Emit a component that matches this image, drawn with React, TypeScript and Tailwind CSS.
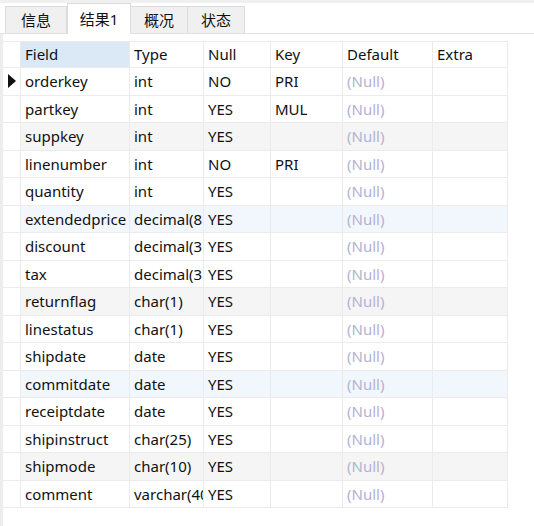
import React from 'react';

type Row = { field: string; type: string; nul: string; key: string; tint?: 'gray' | 'blue' };

const rows: Row[] = [
  { field: 'orderkey', type: 'int', nul: 'NO', key: 'PRI' },
  { field: 'partkey', type: 'int', nul: 'YES', key: 'MUL' },
  { field: 'suppkey', type: 'int', nul: 'YES', key: '', tint: 'gray' },
  { field: 'linenumber', type: 'int', nul: 'NO', key: 'PRI' },
  { field: 'quantity', type: 'int', nul: 'YES', key: '' },
  { field: 'extendedprice', type: 'decimal(8', nul: 'YES', key: '', tint: 'blue' },
  { field: 'discount', type: 'decimal(3', nul: 'YES', key: '' },
  { field: 'tax', type: 'decimal(3', nul: 'YES', key: '' },
  { field: 'returnflag', type: 'char(1)', nul: 'YES', key: '', tint: 'gray' },
  { field: 'linestatus', type: 'char(1)', nul: 'YES', key: '' },
  { field: 'shipdate', type: 'date', nul: 'YES', key: '' },
  { field: 'commitdate', type: 'date', nul: 'YES', key: '', tint: 'blue' },
  { field: 'receiptdate', type: 'date', nul: 'YES', key: '' },
  { field: 'shipinstruct', type: 'char(25)', nul: 'YES', key: '' },
  { field: 'shipmode', type: 'char(10)', nul: 'YES', key: '', tint: 'gray' },
  { field: 'comment', type: 'varchar(40)', nul: 'YES', key: '' },
];

const tabs = ['信息', '结果1', '概况', '状态'];

const cell = 'h-full border-r border-b border-[#ebebeb] pl-[4px] flex items-center overflow-hidden whitespace-nowrap';

export default function App() {
  return (
    <div
      className="w-[534px] h-[526px] bg-white overflow-hidden text-[15px] text-[#111] flex flex-col"
      style={{ fontFamily: '"Noto Sans", "Noto Sans CJK SC", sans-serif' }}
    >
      {/* tab strip */}
      <div className="h-[34px] border-t-[3px] border-[#f0f0f0] border-b border-b-[#e2e2e2] flex items-end pl-[5px] shrink-0">
        {tabs.map((t, i) =>
          i === 1 ? (
            <div key={t} className="h-[31px] w-[64px] bg-white border border-b-0 border-[#dcdcdc] flex items-center justify-center -mb-px">
              {t}
            </div>
          ) : (
            <div
              key={t}
              className={
                'h-[27px] bg-[#f0f0f0] border border-b-0 border-[#dcdcdc] flex items-center justify-center ' +
                (i === 0 ? 'w-[62px]' : 'w-[58px] -ml-px')
              }
            >
              {t}
            </div>
          )
        )}
      </div>

      {/* grid area */}
      <div className="flex flex-1">
        <div className="w-[3px] bg-[#ededed] shrink-0" />
        <div className="pt-[7px]">
          {/* header */}
          <div className="flex h-[27px] border-t border-[#ebebeb]">
            <div className="w-[18px] h-full border-r border-b border-[#ebebeb]" />
            <div className={cell + ' w-[109px] bg-[#dbe8f6]'}>Field</div>
            <div className={cell + ' w-[74px]'}>Type</div>
            <div className={cell + ' w-[67px]'}>Null</div>
            <div className={cell + ' w-[72px]'}>Key</div>
            <div className={cell + ' w-[90px]'}>Default</div>
            <div className={cell + ' w-[75px]'}>Extra</div>
          </div>
          {rows.map((r, i) => {
            const bg = r.tint === 'gray' ? 'bg-[#f5f5f5]' : r.tint === 'blue' ? 'bg-[#f2f7fd]' : 'bg-white';
            return (
              <div key={r.field} className={'flex h-[27.5px] ' + bg}>
                <div className="w-[18px] h-full border-r border-b border-[#ebebeb] flex items-center justify-center bg-white">
                  {i === 0 && (
                    <svg width="8" height="14" viewBox="0 0 8 14">
                      <path d="M0 0 L8 7 L0 14 Z" fill="#111" />
                    </svg>
                  )}
                </div>
                <div className={cell + ' w-[109px]'}>{r.field}</div>
                <div className={cell + ' w-[74px]'}>{r.type}</div>
                <div className={cell + ' w-[67px]'}>{r.nul}</div>
                <div className={cell + ' w-[72px]'}>{r.key}</div>
                <div className={cell + ' w-[90px] text-[#b0b4d2]'}>(Null)</div>
                <div className={cell + ' w-[75px]'} />
              </div>
            );
          })}
        </div>
      </div>
    </div>
  );
}
